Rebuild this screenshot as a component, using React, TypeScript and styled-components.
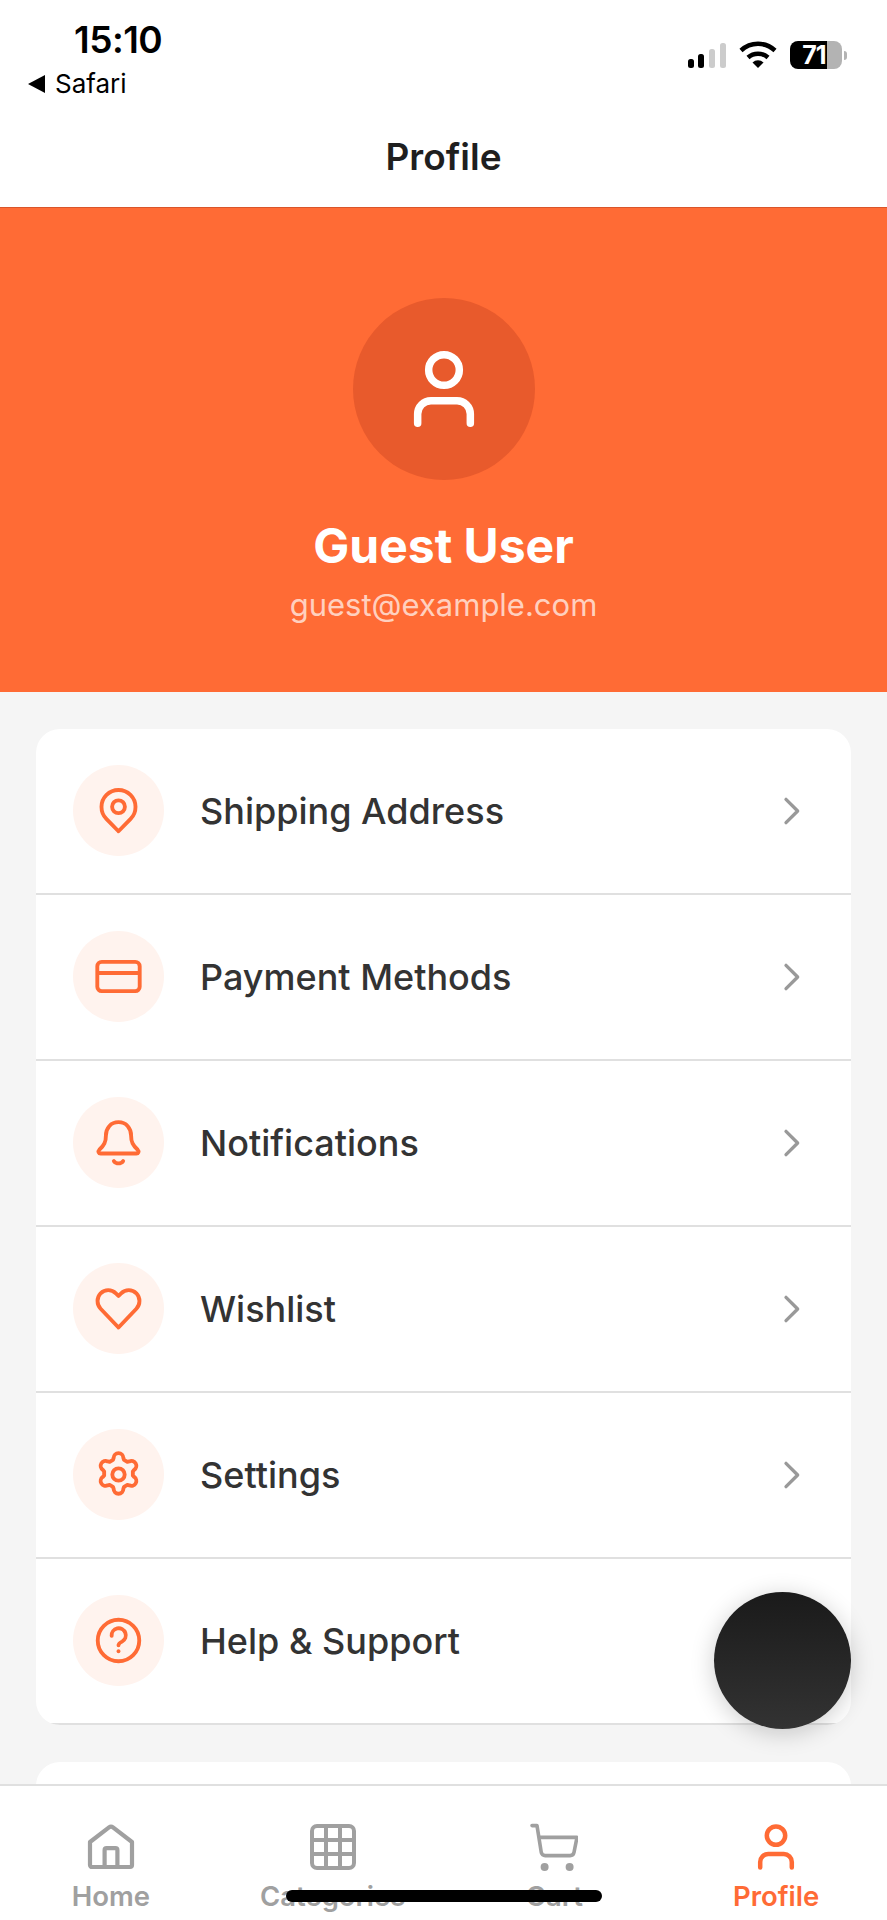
import React from 'react';
import styled, { createGlobalStyle } from 'styled-components';

const ORANGE = '#ff6b35';

const GlobalStyle = createGlobalStyle`
  html, body {
    margin: 0;
    padding: 0;
    background: #fff;
    font-family: Inter, "Liberation Sans", sans-serif;
  }
`;

type MenuEntry = { label: string; icon: React.ReactNode };

const PinIcon = () => (
  <svg viewBox="0 0 24 24" fill="none" stroke="currentColor" strokeWidth="1.75" strokeLinejoin="round">
    <path d="M12 21.4 6.5 15.8A7.7 7.7 0 1 1 17.5 15.8Z" />
    <circle cx="12" cy="10.300" r="2.900" />
  </svg>
);

const CardIcon = () => (
  <svg viewBox="0 0 24 24" fill="none" stroke="currentColor" strokeWidth="1.75" strokeLinejoin="round">
    <rect x="2.400" y="5.350" width="19.200" height="13.300" rx="2" />
    <path d="M2.400 10.400h19.200" />
  </svg>
);

const BellIcon = () => (
  <svg viewBox="0 0 24 24" fill="none" stroke="currentColor" strokeWidth="1.75" strokeLinecap="round" strokeLinejoin="round">
    <path d="M12 2.800c-3.600 0-5.700 2.800-5.700 6 0 3-.8 4.500-3 6.500-.7.700-.3 1.700.6 1.700h16.200c.9 0 1.300-1 .6-1.700-2.200-2-3-3.500-3-6.500 0-3.200-2.100-6-5.700-6Z" />
    <path d="M9.900 20.400a2.600 2.600 0 0 0 4.200 0" />
  </svg>
);

const HeartIcon = () => (
  <svg viewBox="0 0 24 24" fill="none" stroke="currentColor" strokeWidth="1.75" strokeLinejoin="round">
    <path d="M12 20.600 3.900 12.100a5.100 5.100 0 0 1 0-7 4.900 4.900 0 0 1 6.900 0L12 6.300l1.200-1.200a4.900 4.900 0 0 1 6.900 0 5.100 5.100 0 0 1 0 7Z" />
  </svg>
);

const GearIcon = () => (
  <svg viewBox="0 0 24 24" fill="none" stroke="currentColor" strokeWidth="1.75" strokeLinejoin="round">
    <path d="M9.800 4.500a2.200 2.200 0 0 1 4.400 0l.3.900 1.500.9.900-.2a2.200 2.200 0 0 1 2.200 3.800l-.6.700v1.800l.6.700a2.200 2.200 0 0 1-2.200 3.800l-.9-.2-1.500.9-.3.900a2.200 2.200 0 0 1-4.400 0l-.3-.9-1.500-.9-.9.2a2.200 2.200 0 0 1-2.200-3.800l.6-.7v-1.800l-.6-.7a2.200 2.200 0 0 1 2.200-3.800l.9.2 1.500-.9Z" />
    <circle cx="12" cy="12" r="2.800" />
  </svg>
);

const HelpIcon = () => (
  <svg viewBox="0 0 24 24" fill="none" stroke="currentColor" strokeWidth="1.75" strokeLinecap="round">
    <circle cx="12" cy="12" r="9.400" />
    <path d="M8.900 9.900a3.200 3.200 0 1 1 4.700 2.600c-1 .5-1.600 1-1.600 1.700" />
    <path d="M12 16.800v.1" />
  </svg>
);

const UserIcon = () => (
  <svg viewBox="0 0 24 24" fill="none" stroke="currentColor" strokeWidth="2.250" strokeLinecap="round">
    <circle cx="12" cy="6.300" r="4.600" />
    <path d="M4.100 22.300v-2.800a4 4 0 0 1 4-4h7.800a4 4 0 0 1 4 4v2.800" />
  </svg>
);

const HomeIcon = () => (
  <svg viewBox="0 0 24 24" fill="none" stroke="currentColor" strokeWidth="2.100" strokeLinejoin="round">
    <path d="M1.500 9.500 11 2.200a1.600 1.600 0 0 1 2 0l9.500 7.300V21a1 1 0 0 1-1 1h-19a1 1 0 0 1-1-1Z" />
    <path d="M8.800 22v-8.400a1 1 0 0 1 1-1h4.400a1 1 0 0 1 1 1V22" />
  </svg>
);

const GridIcon = () => (
  <svg viewBox="0 0 24 24" fill="none" stroke="currentColor" strokeWidth="2" strokeLinejoin="round">
    <rect x="1.500" y="1.500" width="21" height="21" rx="2.500" />
    <path d="M1.500 8.500h21M1.500 15.500h21M8.500 1.500v21M15.500 1.500v21" />
  </svg>
);

const CartIcon = () => (
  <svg viewBox="0 0 24 24" fill="none" stroke="currentColor" strokeWidth="1.800" strokeLinecap="round" strokeLinejoin="round">
    <path d="M1 1.300h2.500l2.100 13.200a2 2 0 0 0 2 1.800H20a2 2 0 0 0 2-1.600l1.500-7.500H4.600" />
    <circle cx="7.300" cy="22" r="2" fill="currentColor" stroke="none" />
    <circle cx="19.800" cy="22" r="2" fill="currentColor" stroke="none" />
  </svg>
);

const Chevron = () => (
  <svg viewBox="0 0 24 24" fill="none" stroke="currentColor" strokeWidth="2" strokeLinecap="round" strokeLinejoin="round">
    <path d="m9 5 7 7-7 7" />
  </svg>
);

const menu: MenuEntry[] = [
  { label: 'Shipping Address', icon: <PinIcon /> },
  { label: 'Payment Methods', icon: <CardIcon /> },
  { label: 'Notifications', icon: <BellIcon /> },
  { label: 'Wishlist', icon: <HeartIcon /> },
  { label: 'Settings', icon: <GearIcon /> },
  { label: 'Help & Support', icon: <HelpIcon /> },
];

const tabs = [
  { label: 'Home', icon: <HomeIcon /> },
  { label: 'Categories', icon: <GridIcon /> },
  { label: 'Cart', icon: <CartIcon /> },
  { label: 'Profile', icon: <UserIcon />, active: true },
];

const App: React.FC = () => {
  return (
    <StyledPhone>
      <GlobalStyle />
      <StyledStatusBar>
        <StyledStatusLeft>
          <StyledTime>15:10</StyledTime>
          <StyledBackLink>
            <StyledBackArrow />
            Safari
          </StyledBackLink>
        </StyledStatusLeft>
        <StyledStatusRight>
          <svg width="38" height="26" viewBox="0 0 38 26">
            <rect x="0" y="16" width="6" height="9" rx="2.500" fill="#000" />
            <rect x="10" y="11" width="6" height="14" rx="2.500" fill="#000" />
            <rect x="21" y="6" width="6" height="19" rx="2.500" fill="#ccc" />
            <rect x="32" y="0" width="6" height="25" rx="2.500" fill="#ccc" />
          </svg>
          <svg width="38" height="28" viewBox="0 0 38 28" fill="none" stroke="#000" strokeWidth="4.500">
            <path d="M2 9.500a25 25 0 0 1 34 0" />
            <path d="M9 16.500a15 15 0 0 1 20 0" />
            <path d="M13.500 21.500 19 27l5.500-5.500a8 8 0 0 0-11 0Z" fill="#000" stroke="none" />
          </svg>
          <StyledBattery>
            <StyledBatteryBody>71</StyledBatteryBody>
            <StyledBatteryTip />
          </StyledBattery>
        </StyledStatusRight>
      </StyledStatusBar>

      <StyledHeader>Profile</StyledHeader>

      <StyledContent>
        <StyledHero>
          <StyledAvatar>
            <UserIcon />
          </StyledAvatar>
          <StyledName>Guest User</StyledName>
          <StyledEmail>guest@example.com</StyledEmail>
        </StyledHero>

        <StyledCard>
          {menu.map(item => (
            <StyledRow key={item.label}>
              <StyledRowIcon>{item.icon}</StyledRowIcon>
              <StyledRowLabel>{item.label}</StyledRowLabel>
              <StyledChevron>
                <Chevron />
              </StyledChevron>
            </StyledRow>
          ))}
        </StyledCard>
        <StyledCard />
      </StyledContent>

      <StyledTabBar>
        {tabs.map(tab => (
          <StyledTab key={tab.label} $active={tab.active}>
            <StyledTabIcon>{tab.icon}</StyledTabIcon>
            {tab.label}
          </StyledTab>
        ))}
      </StyledTabBar>

      <StyledFab />
      <StyledHomeIndicator />
    </StyledPhone>
  );
};

const StyledPhone = styled.div`
  position: relative;
  display: flex;
  flex-direction: column;
  width: 887px;
  height: 1920px;
  overflow: hidden;
  background: #fff;
`;

// ----------------- Status bar -----------------
const StyledStatusBar = styled.div`
  display: flex;
  justify-content: space-between;
  height: 110px;
  padding: 0 40px 0 28px;
  box-sizing: border-box;
`;
const StyledStatusLeft = styled.div`
  display: flex;
  flex-direction: column;
`;
const StyledTime = styled.div`
  margin: 20px 0 0 46px;
  font-size: 37px;
  line-height: 40px;
  font-weight: 600;
  letter-spacing: -0.5px;
  color: #000;
`;
const StyledBackLink = styled.div`
  display: flex;
  align-items: center;
  gap: 10px;
  margin-top: 9px;
  font-size: 26px;
  line-height: 30px;
  color: #000;
`;
const StyledBackArrow = styled.span`
  width: 0;
  height: 0;
  border-top: 9px solid transparent;
  border-bottom: 9px solid transparent;
  border-right: 17px solid #000;
`;
const StyledStatusRight = styled.div`
  display: flex;
  align-items: flex-end;
  gap: 13px;
  height: 69px;
`;
const StyledBattery = styled.div`
  display: flex;
  align-items: center;
  gap: 2px;
`;
const StyledBatteryBody = styled.div`
  width: 52px;
  height: 28px;
  padding-right: 4px;
  box-sizing: border-box;
  border-radius: 8px;
  background: linear-gradient(90deg, #000 0 71%, #b3b3b3 71% 100%);
  color: #fff;
  font-size: 25px;
  font-weight: 700;
  line-height: 28px;
  letter-spacing: -1px;
  text-align: center;
`;
const StyledBatteryTip = styled.div`
  width: 3px;
  height: 9px;
  border-radius: 0 3px 3px 0;
  background: #b3b3b3;
`;

// ----------------- Header -----------------
const StyledHeader = styled.div`
  display: flex;
  align-items: center;
  justify-content: center;
  height: 97px;
  padding-bottom: 4px;
  box-sizing: border-box;
  font-size: 37px;
  font-weight: 600;
  color: #1f1f1f;
`;

// ----------------- Content -----------------
const StyledContent = styled.div`
  flex: 1;
  min-height: 0;
  overflow: hidden;
  background: #f5f5f5;
`;
const StyledHero = styled.div`
  display: flex;
  flex-direction: column;
  align-items: center;
  height: 485px;
  padding-top: 91px;
  box-sizing: border-box;
  background: ${ORANGE};
  box-shadow: inset 0 1px 0 #d9552a;
  color: #fff;
`;
const StyledAvatar = styled.div`
  display: flex;
  align-items: center;
  justify-content: center;
  width: 182px;
  height: 182px;
  border-radius: 50%;
  background: #e85a2c;

  svg {
    width: 80px;
    height: 80px;
  }
`;
const StyledName = styled.div`
  margin-top: 37px;
  font-size: 48px;
  line-height: 58px;
  font-weight: 700;
`;
const StyledEmail = styled.div`
  margin-top: 12px;
  font-size: 31px;
  line-height: 36px;
  color: rgba(255, 255, 255, 0.7);
`;
const StyledCard = styled.div`
  margin: 37px 36px 0;
  border-radius: 24px;
  overflow: hidden;
  background: #fff;
  min-height: 60px;
`;
const StyledRow = styled.div`
  display: flex;
  align-items: center;
  height: 166px;
  padding: 0 40px 1px 37px;
  box-sizing: border-box;
  border-bottom: 2px solid #e0e0e0;
`;
const StyledRowIcon = styled.div`
  display: flex;
  align-items: center;
  justify-content: center;
  flex: none;
  width: 91px;
  height: 91px;
  border-radius: 50%;
  background: #fff3ee;
  color: ${ORANGE};

  svg {
    width: 53px;
    height: 53px;
  }
`;
const StyledRowLabel = styled.div`
  flex: 1;
  margin-left: 36px;
  font-size: 36px;
  font-weight: 500;
  color: #333;
`;
const StyledChevron = styled.div`
  display: flex;
  flex: none;
  color: #999;

  svg {
    width: 40px;
    height: 40px;
  }
`;

// ----------------- Tab bar -----------------
const StyledTabBar = styled.div`
  display: flex;
  height: 136px;
  flex: none;
  box-sizing: border-box;
  padding-top: 37px;
  background: #fff;
  border-top: 2px solid #e0e0e0;
`;
const StyledTab = styled.div<{ $active?: boolean }>`
  flex: 1;
  display: flex;
  flex-direction: column;
  align-items: center;
  font-size: 27.500px;
  line-height: 30px;
  font-weight: 600;
  color: ${props => (props.$active ? ORANGE : '#a0a0a0')};
`;
const StyledTabIcon = styled.div`
  display: flex;
  margin-bottom: 10px;

  svg {
    width: 48px;
    height: 48px;
  }
`;

// ----------------- Overlays -----------------
const StyledFab = styled.div`
  position: absolute;
  left: 714px;
  top: 1592px;
  width: 137px;
  height: 137px;
  border-radius: 50%;
  background: linear-gradient(180deg, #1a1a1a, #333);
  box-shadow: 0 4px 24px rgba(0, 0, 0, 0.2);
`;
const StyledHomeIndicator = styled.div`
  position: absolute;
  left: 286px;
  top: 1890px;
  width: 316px;
  height: 12px;
  border-radius: 6px;
  background: #000;
`;

export default App;
